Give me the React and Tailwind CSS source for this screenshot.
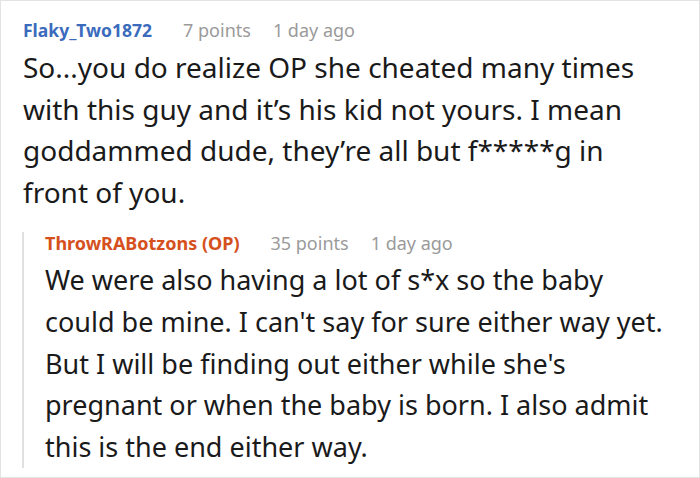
import React from 'react';

const comment = {
  author: 'Flaky_Two1872',
  points: '7 points',
  time: '1 day ago',
  lines: [
    'So...you do realize OP she cheated many times',
    'with this guy and it’s his kid not yours. I mean',
    'goddammed dude, they’re all but f*****g in',
    'front of you.',
  ],
};

const reply = {
  author: 'ThrowRABotzons (OP)',
  points: '35 points',
  time: '1 day ago',
  lines: [
    'We were also having a lot of s*x so the baby',
    "could be mine. I can't say for sure either way yet.",
    "But I will be finding out either while she's",
    'pregnant or when the baby is born. I also admit',
    'this is the end either way.',
  ],
};

function Meta({ author, points, time, nameClass }) {
  return (
    <div className="flex items-baseline text-[18px] leading-[22px] whitespace-nowrap">
      <span className={`font-bold ${nameClass}`}>{author}</span>
      <span className="ml-[31px] text-[#9a9a9a]">{points}</span>
      <span className="ml-[22px] text-[#9a9a9a]">{time}</span>
    </div>
  );
}

function Body({ lines, size }) {
  return (
    <p className={`${size} whitespace-nowrap`}>
      {lines.map((line) => (
        <span key={line} className="block">{line}</span>
      ))}
    </p>
  );
}

export default function App() {
  return (
    <div
      className="w-[700px] h-[478px] bg-white border border-[#e3e3e3] overflow-hidden text-[#1a1a1b]"
      style={{ fontFamily: '"Noto Sans", "Open Sans", sans-serif' }}
    >
      <div className="pl-[22px] pt-[18px]">
        <Meta {...comment} nameClass="text-[17.5px] text-[#3b6bbd]" />
        <div className="mt-[6px]">
          <Body lines={comment.lines} size="text-[28px] leading-[41.5px]" />
        </div>
      </div>

      <div className="ml-[21px] mt-[19px] border-l-2 border-[#e0e0e0] pl-[21px]">
        <Meta {...reply} nameClass="text-[#d5501d]" />
        <div className="mt-[5px]">
          <Body lines={reply.lines} size="text-[27px] leading-[41.75px]" />
        </div>
      </div>
    </div>
  );
}
